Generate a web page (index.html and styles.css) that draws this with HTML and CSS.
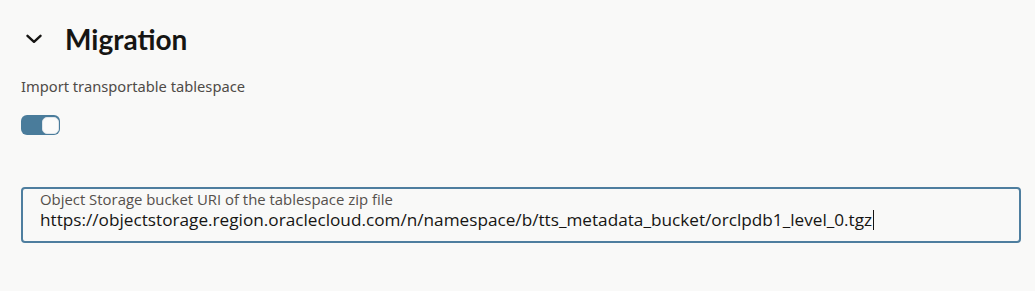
FILE: index.html
```html
<!DOCTYPE html>
<html>
<head>
<meta charset="utf-8">
<link rel="stylesheet" href="styles.css">
</head>
<body>
<section class="panel">
  <div class="header">
    <span class="chevron"><svg width="16" height="10" viewBox="0 0 16 10"><path d="M1.5 1.8 L8 7.8 L14.5 1.8" fill="none" stroke="#161513" stroke-width="2.4" stroke-linecap="round" stroke-linejoin="round"/></svg></span>
    <h2 class="title">Migration</h2>
  </div>
  <div class="field-label">Import transportable tablespace</div>
  <div class="switch"><span class="knob"></span></div>
  <div class="input">
    <div class="input-label">Object Storage bucket URI of the tablespace zip file</div>
    <div class="input-value">https://objectstorage.region.oraclecloud.com/n/namespace/b/tts_metadata_bucket/orclpdb1_level_0.tgz<span class="caret"></span></div>
  </div>
</section>
</body>
</html>
```
FILE: styles.css
```css
html, body {
  margin: 0;
  padding: 0;
  background: #f9f9f8;
}
.panel {
  padding: 22px 14px 0 21px;
  font-family: "Noto Sans", sans-serif;
  color: #161513;
}
.header {
  display: flex;
  align-items: center;
  height: 34px;
}
.chevron {
  display: flex;
  margin-left: 5px;
  width: 16px;
}
.title {
  margin: 0 0 0 23px;
  font-family: "Lato", sans-serif;
  font-weight: 700;
  font-size: 28px;
  line-height: 34px;
}
.field-label {
  margin-top: 21px;
  font-size: 14.7px;
  line-height: 18px;
  color: #4f4b47;
}
.switch {
  margin-top: 20px;
  width: 39px;
  height: 20px;
  box-sizing: border-box;
  background: #4a7c9b;
  border-radius: 6px;
  display: flex;
  justify-content: flex-end;
  align-items: center;
  padding-right: 1px;
}
.knob {
  width: 17px;
  height: 17px;
  box-sizing: border-box;
  border-radius: 5px;
  background: #fbfbfa;
  border: 1px solid #dfe5ea;
}
.input {
  margin-top: 52px;
  width: 1000px;
  height: 56px;
  box-sizing: border-box;
  border: 2px solid #4e7e9f;
  border-radius: 4px;
  padding: 1px 0 0 17px;
  font-family: "Open Sans", sans-serif;
}
.input-label {
  font-size: 14.9px;
  line-height: 18px;
  color: #55504c;
}
.input-value {
  font-size: 17.2px;
  line-height: 24px;
  color: #161513;
  display: flex;
  align-items: center;
}
.caret {
  display: inline-block;
  width: 1px;
  height: 20px;
  background: #161513;
  margin-left: 1px;
}
```
